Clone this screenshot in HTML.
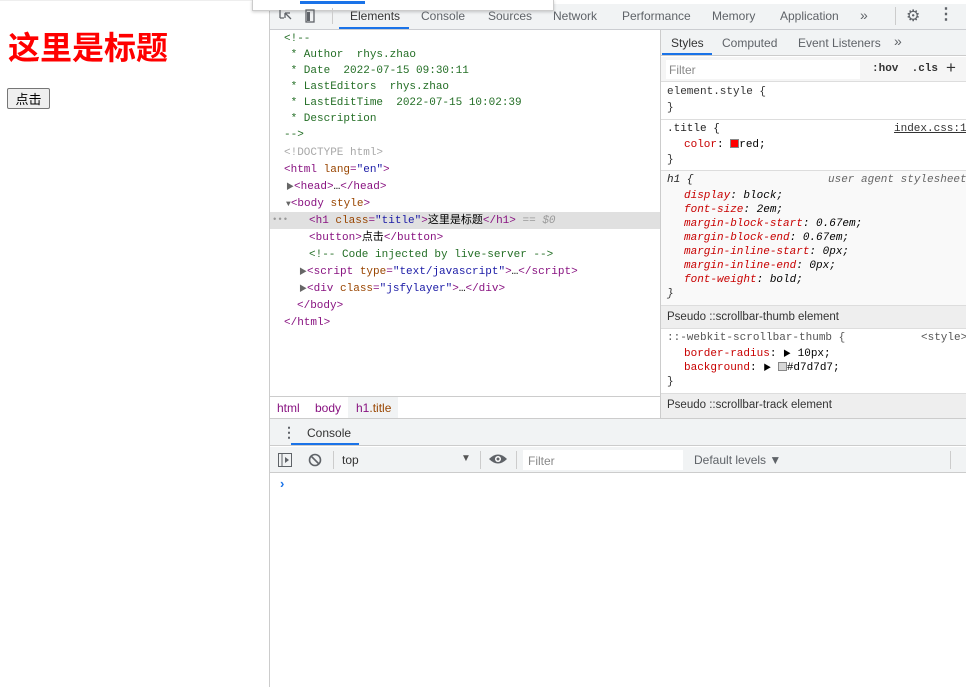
<!DOCTYPE html>
<html><head><meta charset="utf-8"><style>
*{margin:0;padding:0;box-sizing:border-box}
body{width:966px;height:687px;overflow:hidden;background:#fff;font-family:"Liberation Sans","Noto Sans CJK SC",sans-serif;position:relative}
.a{position:absolute;white-space:pre}
.m{font-family:"Liberation Mono","Noto Sans CJK SC",monospace;font-size:11px}
.m .a{line-height:13px}
.s{font-size:12px;color:#333}
.tg{color:#881280}.at{color:#994500}.av{color:#1a1aa6}.cm{color:#236e25}.gr{color:#999}.br{color:#a8a8a8}
.pn{color:#c80000}
</style></head><body>
<div class="a" style="left:8px;top:26px;font-size:32px;font-weight:bold;color:#f00;font-family:'Noto Sans CJK SC',sans-serif;line-height:40px">这里是标题</div>
<div class="a" style="left:7px;top:88px;width:43px;height:21px;border:1px solid #767676;border-radius:2px;background:#efefef;font-size:13px;line-height:19px;text-align:center;font-family:'Noto Sans CJK SC',sans-serif">点击</div>
<div class="a" style="left:0;top:0;width:270px;height:1px;background:#eee"></div>
<div class="a" style="left:269px;top:0;width:1px;height:687px;background:#ccc"></div>
<div class="a" style="left:270px;top:4px;width:696px;height:26px;background:#f1f3f4;border-bottom:1px solid #cbcdd1"></div>
<div class="a" style="left:252px;top:0;width:302px;height:11px;background:#fff;border:1px solid #ccc;border-top:none;box-shadow:0 1px 3px rgba(0,0,0,.2)"></div>
<div class="a" style="left:300px;top:1px;width:65px;height:3px;background:#1a73e8"></div>
<svg class="a" style="left:279px;top:9px" width="36" height="14"><path d="M1 1v8M1 9h4M6 4l6 6M6 4v5M6 4h5" stroke="#5f6368" fill="none" stroke-width="1.3"/><rect x="27" y="1" width="8" height="12" stroke="#5f6368" fill="none" stroke-width="1.3"/><rect x="28" y="3" width="3" height="9" fill="#5f6368"/></svg>
<div class="a" style="left:332px;top:8px;width:1px;height:16px;background:#ccc"></div>
<div class="a s" style="left:350px;top:9px;color:#333">Elements</div>
<div class="a" style="left:339px;top:27px;width:70px;height:2px;background:#1a73e8"></div>
<div class="a s" style="left:421px;top:9px;color:#5f6368">Console</div>
<div class="a s" style="left:488px;top:9px;color:#5f6368">Sources</div>
<div class="a s" style="left:553px;top:9px;color:#5f6368">Network</div>
<div class="a s" style="left:622px;top:9px;color:#5f6368">Performance</div>
<div class="a s" style="left:712px;top:9px;color:#5f6368">Memory</div>
<div class="a s" style="left:780px;top:9px;color:#5f6368">Application</div>
<div class="a s" style="left:860px;top:7px;color:#5f6368;font-size:14px">»</div>
<div class="a" style="left:895px;top:7px;width:1px;height:18px;background:#ccc"></div>
<div class="a" style="left:906px;top:6px;font-size:16px;color:#5f6368">⚙</div>
<div class="a" style="left:938px;top:4px;font-size:16px;color:#5f6368;font-weight:bold">⋮</div>
<div class="m">
<div class="a cm" style="left:284px;top:33px">&lt;!--</div>
<div class="a cm" style="left:284px;top:49px"> * Author  rhys.zhao</div>
<div class="a cm" style="left:284px;top:65px"> * Date  2022-07-15 09:30:11</div>
<div class="a cm" style="left:284px;top:81px"> * LastEditors  rhys.zhao</div>
<div class="a cm" style="left:284px;top:97px"> * LastEditTime  2022-07-15 10:02:39</div>
<div class="a cm" style="left:284px;top:113px"> * Description</div>
<div class="a cm" style="left:284px;top:129px">--&gt;</div>
<div class="a br" style="left:284px;top:147px">&lt;!DOCTYPE html&gt;</div>
<div class="a" style="left:284px;top:164px"><span class="tg">&lt;html</span> <span class="at">lang</span><span class="tg">=</span><span class="av">"en"</span><span class="tg">&gt;</span></div>
<div class="a" style="left:286px;top:181px"><span style="font-size:8px;color:#666">▶</span><span class="tg">&lt;head&gt;</span>…<span class="tg">&lt;/head&gt;</span></div>
<div class="a" style="left:286px;top:198px"><span style="font-size:8px;color:#666">▼</span><span class="tg">&lt;body</span> <span class="at">style</span><span class="tg">&gt;</span></div>
<div class="a" style="left:270px;top:212px;width:390px;height:17px;background:#e0e0e0"></div>
<div class="a gr" style="left:272px;top:214px;font-size:9px">•••</div>
<div class="a" style="left:309px;top:215px"><span class="tg">&lt;h1</span> <span class="at">class</span><span class="tg">=</span><span class="av">"title"</span><span class="tg">&gt;</span>这里是标题<span class="tg">&lt;/h1&gt;</span> <span class="gr">== <i>$0</i></span></div>
<div class="a" style="left:309px;top:232px"><span class="tg">&lt;button&gt;</span>点击<span class="tg">&lt;/button&gt;</span></div>
<div class="a cm" style="left:309px;top:249px">&lt;!-- Code injected by live-server --&gt;</div>
<div class="a" style="left:299px;top:266px"><span style="font-size:8px;color:#666">▶</span><span class="tg">&lt;script</span> <span class="at">type</span><span class="tg">=</span><span class="av">"text/javascript"</span><span class="tg">&gt;</span>…<span class="tg">&lt;/script&gt;</span></div>
<div class="a" style="left:299px;top:283px"><span style="font-size:8px;color:#666">▶</span><span class="tg">&lt;div</span> <span class="at">class</span><span class="tg">=</span><span class="av">"jsfylayer"</span><span class="tg">&gt;</span>…<span class="tg">&lt;/div&gt;</span></div>
<div class="a tg" style="left:297px;top:300px">&lt;/body&gt;</div>
<div class="a tg" style="left:284px;top:317px">&lt;/html&gt;</div>
</div>
<div class="a" style="left:270px;top:396px;width:391px;height:1px;background:#ccc"></div>
<div class="a" style="left:348px;top:397px;width:50px;height:21px;background:#f1f3f4"></div>
<div class="a s tg" style="left:277px;top:401px">html</div>
<div class="a s tg" style="left:315px;top:401px">body</div>
<div class="a s" style="left:356px;top:401px"><span class="tg">h1</span><span class="at">.title</span></div>
<div class="a" style="left:660px;top:30px;width:1px;height:388px;background:#ccc"></div>
<div class="a" style="left:661px;top:30px;width:305px;height:26px;background:#f1f3f4;border-bottom:1px solid #ccc"></div>
<div class="a s" style="left:671px;top:36px">Styles</div>
<div class="a" style="left:662px;top:53px;width:50px;height:2px;background:#1a73e8"></div>
<div class="a s" style="left:722px;top:36px;color:#5f6368">Computed</div>
<div class="a s" style="left:798px;top:36px;color:#5f6368">Event Listeners</div>
<div class="a s" style="left:894px;top:33px;color:#5f6368;font-size:14px">»</div>
<div class="a" style="left:661px;top:57px;width:305px;height:25px;background:#f5f5f5;border-bottom:1px solid #ddd"></div>
<div class="a" style="left:666px;top:60px;width:194px;height:19px;background:#fff"></div>
<div class="a s" style="left:669px;top:63px;color:#888">Filter</div>
<div class="a m" style="left:872px;top:63px;color:#333;font-weight:bold">:hov  .cls</div>
<div class="a" style="left:946px;top:58px;font-size:17px;color:#333">+</div>
<div class="m">
<div class="a" style="left:667px;top:86px;color:#333">element.style {</div>
<div class="a" style="left:667px;top:102px;color:#333">}</div>
<div class="a" style="left:661px;top:119px;width:305px;height:1px;background:#ddd"></div>
<div class="a" style="left:667px;top:123px;color:#222">.title {</div>
<div class="a" style="left:894px;top:123px;color:#333;text-decoration:underline">index.css:1</div>
<div class="a" style="left:684px;top:139px"><span class="pn">color</span>: <span style="display:inline-block;width:9px;height:9px;background:red;border:1px solid #888;vertical-align:-1px"></span>red;</div>
<div class="a" style="left:667px;top:154px;color:#333">}</div>
<div class="a" style="left:661px;top:170px;width:305px;height:1px;background:#ddd"></div>
<div class="a" style="left:661px;top:171px;width:305px;height:134px;background:#f9f9f9"></div>
<div class="a" style="left:667px;top:174px;font-style:italic;color:#222">h1 {</div>
<div class="a" style="left:828px;top:174px;font-style:italic;color:#666">user agent stylesheet</div>
<div class="a" style="left:684px;top:190px;font-style:italic"><span class="pn">display</span>: block;</div>
<div class="a" style="left:684px;top:204px;font-style:italic"><span class="pn">font-size</span>: 2em;</div>
<div class="a" style="left:684px;top:218px;font-style:italic"><span class="pn">margin-block-start</span>: 0.67em;</div>
<div class="a" style="left:684px;top:232px;font-style:italic"><span class="pn">margin-block-end</span>: 0.67em;</div>
<div class="a" style="left:684px;top:246px;font-style:italic"><span class="pn">margin-inline-start</span>: 0px;</div>
<div class="a" style="left:684px;top:260px;font-style:italic"><span class="pn">margin-inline-end</span>: 0px;</div>
<div class="a" style="left:684px;top:274px;font-style:italic"><span class="pn">font-weight</span>: bold;</div>
<div class="a" style="left:667px;top:288px;font-style:italic;color:#333">}</div>
</div>
<div class="a" style="left:661px;top:305px;width:305px;height:24px;background:#eee;border-top:1px solid #ddd;border-bottom:1px solid #ddd"></div>
<div class="a s" style="left:667px;top:311px;font-size:11.5px">Pseudo ::scrollbar-thumb element</div>
<div class="m">
<div class="a" style="left:667px;top:332px;color:#555">::-webkit-scrollbar-thumb {</div>
<div class="a" style="left:921px;top:332px;color:#555">&lt;style&gt;</div>
<div class="a" style="left:684px;top:348px"><span class="pn">border-radius</span>: <span style="font-size:8px">▶</span> 10px;</div>
<div class="a" style="left:684px;top:362px"><span class="pn">background</span>: <span style="font-size:8px">▶</span> <span style="display:inline-block;width:9px;height:9px;background:#d7d7d7;border:1px solid #888;vertical-align:-1px"></span>#d7d7d7;</div>
<div class="a" style="left:667px;top:376px;color:#333">}</div>
</div>
<div class="a" style="left:661px;top:393px;width:305px;height:25px;background:#eee;border-top:1px solid #ddd"></div>
<div class="a s" style="left:667px;top:399px;font-size:11.5px">Pseudo ::scrollbar-track element</div>
<div class="a" style="left:270px;top:418px;width:696px;height:28px;background:#f1f3f4;border-top:1px solid #ccc;border-bottom:1px solid #ccc"></div>
<div class="a" style="left:282px;top:424px;font-size:14px;color:#5f6368;font-weight:bold">⋮</div>
<div class="a s" style="left:307px;top:426px">Console</div>
<div class="a" style="left:291px;top:443px;width:68px;height:2px;background:#1a73e8"></div>
<div class="a" style="left:270px;top:447px;width:696px;height:26px;background:#f1f3f4;border-bottom:1px solid #ccc"></div>
<svg class="a" style="left:277px;top:452px" width="50" height="16"><rect x="1.5" y="1.5" width="13" height="13" fill="none" stroke="#5f6368"/><path d="M5 2v12" stroke="#5f6368"/><path d="M8 5l4 3-4 3z" fill="#5f6368"/><circle cx="38" cy="8" r="5.5" fill="none" stroke="#5f6368" stroke-width="1.6"/><path d="M34 4l8 8" stroke="#5f6368" stroke-width="1.6"/></svg>
<div class="a" style="left:333px;top:451px;width:1px;height:18px;background:#ccc"></div>
<div class="a s" style="left:342px;top:453px">top</div>
<div class="a" style="left:461px;top:453px;font-size:10px;color:#555">▼</div>
<div class="a" style="left:480px;top:451px;width:1px;height:18px;background:#ccc"></div>
<svg class="a" style="left:488px;top:452px" width="20" height="14"><path d="M1 7q9-9 18 0q-9 9-18 0z" fill="#5f6368"/><circle cx="10" cy="7" r="3" fill="#fff"/><circle cx="10" cy="7" r="1.5" fill="#5f6368"/></svg>
<div class="a" style="left:516px;top:451px;width:1px;height:18px;background:#ccc"></div>
<div class="a" style="left:523px;top:450px;width:160px;height:20px;background:#fff"></div>
<div class="a s" style="left:528px;top:454px;color:#888">Filter</div>
<div class="a s" style="left:694px;top:453px;color:#5f6368">Default levels ▼</div>
<div class="a" style="left:950px;top:451px;width:1px;height:18px;background:#ccc"></div>
<div class="a" style="left:280px;top:476px;color:#1a73e8;font-size:13px;font-weight:bold">›</div>
</body></html>
